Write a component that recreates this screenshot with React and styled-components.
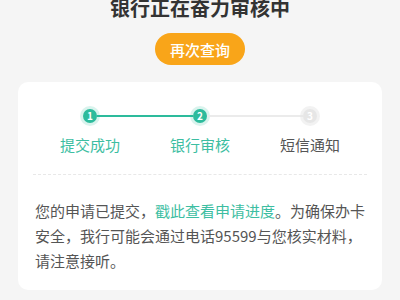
import styled, { createGlobalStyle } from "styled-components";

const GlobalStyle = createGlobalStyle`
  html, body {
    margin: 0;
    padding: 0;
    background: #f5f5f5;
    font-family: "Noto Sans CJK SC", "Noto Sans", sans-serif;
  }
`;

const Page = styled.div`
  width: 400px;
  height: 300px;
  overflow: hidden;
  display: flex;
  flex-direction: column;
  align-items: center;
  & > * {
    flex: none;
  }
`;

const Title = styled.h1`
  margin: -2px 0 0 0;
  font-size: 20px;
  line-height: 20px;
  font-weight: 700;
  color: #333;
`;

const RetryButton = styled.button`
  margin-top: 15px;
  width: 90px;
  height: 32px;
  padding: 0;
  border: none;
  border-radius: 16px;
  background: #f9a519;
  color: #fff;
  font-family: inherit;
  font-size: 15px;
  font-weight: 500;
`;

const Card = styled.div`
  box-sizing: border-box;
  margin-top: 17px;
  width: 364px;
  background: #fff;
  border-radius: 10px;
  padding: 27px 17px 17px;
`;

const Track = styled.div`
  display: flex;
  align-items: center;
  padding: 0 48px;
`;

const Dot = styled.div`
  width: 14px;
  height: 14px;
  flex: none;
  border-radius: 50%;
  display: flex;
  align-items: center;
  justify-content: center;
  font-size: 10px;
  font-weight: 700;
  line-height: 1;
  color: #fff;
  background: ${(p) => (p.$active ? "#2dbb9c" : "#e6e6e6")};
  box-shadow: 0 0 0 3px
    ${(p) => (p.$active ? "rgba(45, 187, 156, 0.18)" : "rgba(230, 230, 230, 0.5)")};
`;

const Connector = styled.div`
  flex: 1;
  height: 2px;
  background: ${(p) => (p.$active ? "#2dbb9c" : "#ebebeb")};
`;

const Labels = styled.div`
  display: grid;
  grid-template-columns: repeat(3, 1fr);
  margin-top: 12px;
`;

const Label = styled.div`
  text-align: center;
  font-size: 15px;
  line-height: 20px;
  color: ${(p) => (p.$active ? "#3dbea2" : "#555")};
`;

const Divider = styled.div`
  margin: 19px -2px 0;
  border-top: 1px dashed #e8e8e8;
`;

const Notice = styled.p`
  margin: 23px 0 0;
  font-size: 15px;
  line-height: 25px;
  color: #555;
  white-space: nowrap;
`;

const Link = styled.span`
  color: #3dbea2;
`;

const steps = [
  { n: 1, label: "提交成功", active: true },
  { n: 2, label: "银行审核", active: true },
  { n: 3, label: "短信通知", active: false },
];

export default function App() {
  return (
    <>
      <GlobalStyle />
      <Page>
        <Title>银行正在奋力审核中</Title>
        <RetryButton>再次查询</RetryButton>
        <Card>
          <Track>
            <Dot $active>1</Dot>
            <Connector $active />
            <Dot $active>2</Dot>
            <Connector />
            <Dot>3</Dot>
          </Track>
          <Labels>
            {steps.map((s) => (
              <Label key={s.n} $active={s.active}>
                {s.label}
              </Label>
            ))}
          </Labels>
          <Divider />
          <Notice>
            您的申请已提交，<Link>戳此查看申请进度</Link>。为确保办卡
            <br />
            安全，我行可能会通过电话95599与您核实材料，
            <br />
            请注意接听。
          </Notice>
        </Card>
      </Page>
    </>
  );
}
